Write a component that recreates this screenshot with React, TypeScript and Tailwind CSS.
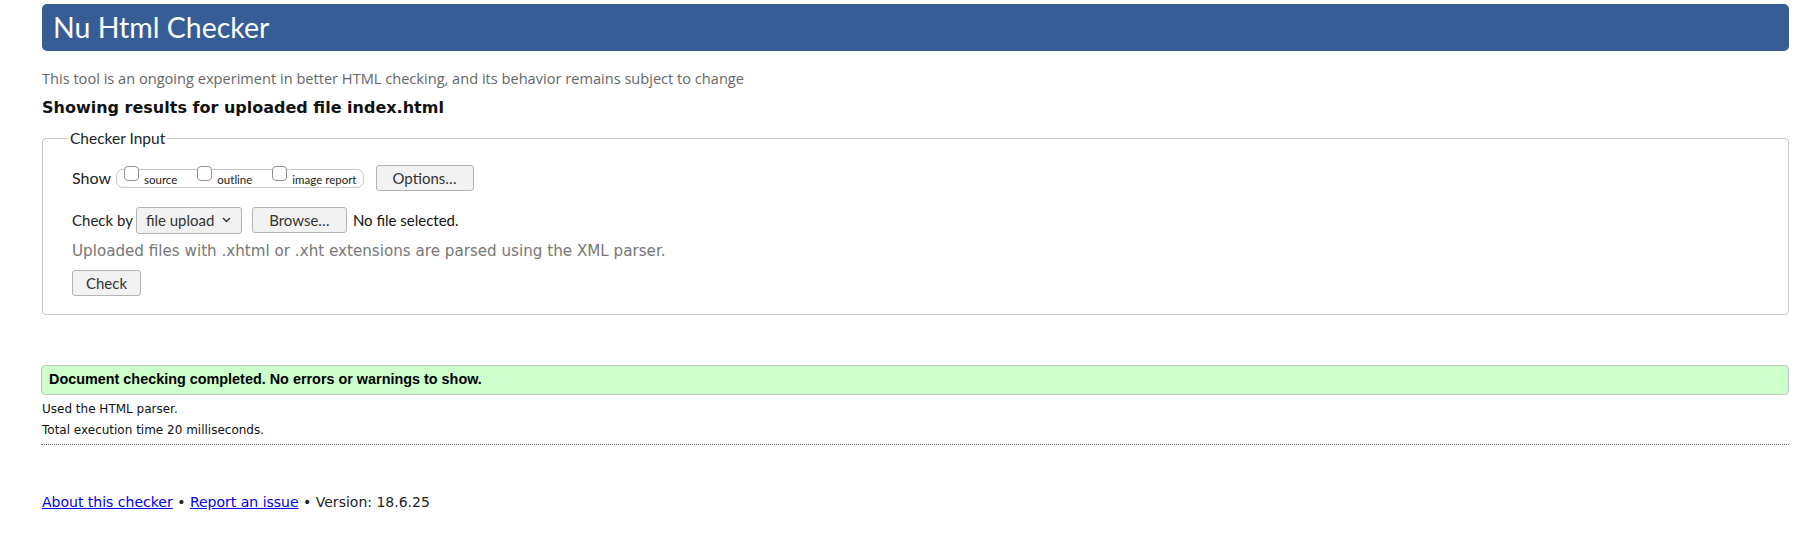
import React from "react";

const lato = { fontFamily: "Lato, 'Open Sans', sans-serif" };
const open = { fontFamily: "'Open Sans', Lato, sans-serif" };
const dejavu = { fontFamily: "'DejaVu Sans', sans-serif" };

function Checkbox({ label }: { label: string }) {
  return (
    <label className="flex items-start h-full">
      <span className="w-[15px] h-[15px] rounded-[4px] border border-[#8f8f8f] bg-white -mt-[4px] shrink-0" />
      <span className="text-[11.5px] leading-none ml-[5px] mt-[4px] text-[#222]">{label}</span>
    </label>
  );
}

export default function App() {
  return (
    <div className="bg-white min-h-[552px] text-[#222]" style={lato}>
      <div className="pl-[42px] pr-[14px] pt-[4px]">
        <header className="h-[47px] bg-[#365d95] rounded-[5px] flex items-center px-[11px]">
          <h1 className="text-[28.5px] text-white leading-none font-normal">Nu Html Checker</h1>
        </header>
      </div>

      <div className="px-[42px]">
        <p className="text-[14.6px] text-[#666] mt-[18px] leading-[18px]" style={open}>
          This tool is an ongoing experiment in better HTML checking, and its behavior remains subject to change
        </p>
        <h2 className="text-[16px] font-bold mt-[11px] leading-[20px] text-[#111]" style={dejavu}>
          Showing results for uploaded file index.html
        </h2>
      </div>

      <div className="pl-[42px] pr-[14px] mt-[10px]">
        <fieldset className="border border-[#c8c8c8] rounded-[4px] pl-[29px] pr-4 pb-[18px] pt-0">
          <legend className="text-[15.5px] leading-[20px] px-[2px] -ml-[4px] text-[#222]">Checker Input</legend>

          <div className="flex items-center mt-[16px] h-[28px]">
            <span className="text-[16px] mr-[5px]">Show</span>
            <div className="flex gap-[20px] border border-[#c8c8c8] rounded-[7px] h-[19px] pl-[7px] pr-[6px] mt-[1px]">
              <Checkbox label="source" />
              <Checkbox label="outline" />
              <Checkbox label="image report" />
            </div>
            <button className="ml-[12px] h-[26px] w-[98px] border border-[#b4b4b4] rounded-[3px] bg-[#f2f2f2] text-[15px] text-[#333]">
              Options…
            </button>
          </div>

          <div className="flex items-center mt-[14px] h-[28px]">
            <span className="text-[15px] mr-[3px]">Check by</span>
            <div className="h-[27px] w-[106px] border border-[#b4b4b4] rounded-[3px] bg-[#f2f2f2] flex items-center pl-[9px] text-[15px] text-[#333]">
              file upload
              <svg className="ml-[8px]" width="9" height="6" viewBox="0 0 9 6">
                <path d="M1 1l3.5 3.5L8 1" fill="none" stroke="#333" strokeWidth="1.4" />
              </svg>
            </div>
            <button className="ml-[10px] h-[26px] w-[95px] border border-[#b4b4b4] rounded-[3px] bg-[#f2f2f2] text-[15px] text-[#333]">
              Browse…
            </button>
            <span className="ml-[6px] text-[15px] text-[#111]">No file selected.</span>
          </div>

          <p className="text-[15.15px] text-[#777] mt-[6px] leading-[22px]" style={dejavu}>
            Uploaded files with .xhtml or .xht extensions are parsed using the XML parser.
          </p>

          <button className="mt-[8px] h-[26px] w-[69px] border border-[#b4b4b4] rounded-[3px] bg-[#f2f2f2] text-[15px] text-[#333] block">
            Check
          </button>
        </fieldset>
      </div>

      <div className="pl-[41px] pr-[14px] mt-[50px]">
        <div
          className="h-[30px] bg-[#ccffcc] border border-[#c4c4c4] rounded-[4px] flex items-center pl-[7px]"
          style={{ fontFamily: "'Liberation Sans', Arial, sans-serif" }}
        >
          <span className="text-[14.4px] font-bold text-black">Document checking completed. No errors or warnings to show.</span>
        </div>
        <div className="pl-[1px] text-[12px] leading-[20px] text-[#111]" style={dejavu}>
          <p className="mt-[4px]">Used the HTML parser.</p>
          <p className="mt-[1px]">Total execution time 20 milliseconds.</p>
        </div>
        <div className="border-t border-dotted border-[#666] mt-[4px]" />
      </div>

      <div className="pl-[42px] mt-[47px] text-[14px] leading-[20px] text-[#222]" style={dejavu}>
        <a href="#" className="text-[#0000ee] underline">About this checker</a>
        {" • "}
        <a href="#" className="text-[#0000ee] underline">Report an issue</a>
        {" • Version: 18.6.25"}
      </div>
    </div>
  );
}
